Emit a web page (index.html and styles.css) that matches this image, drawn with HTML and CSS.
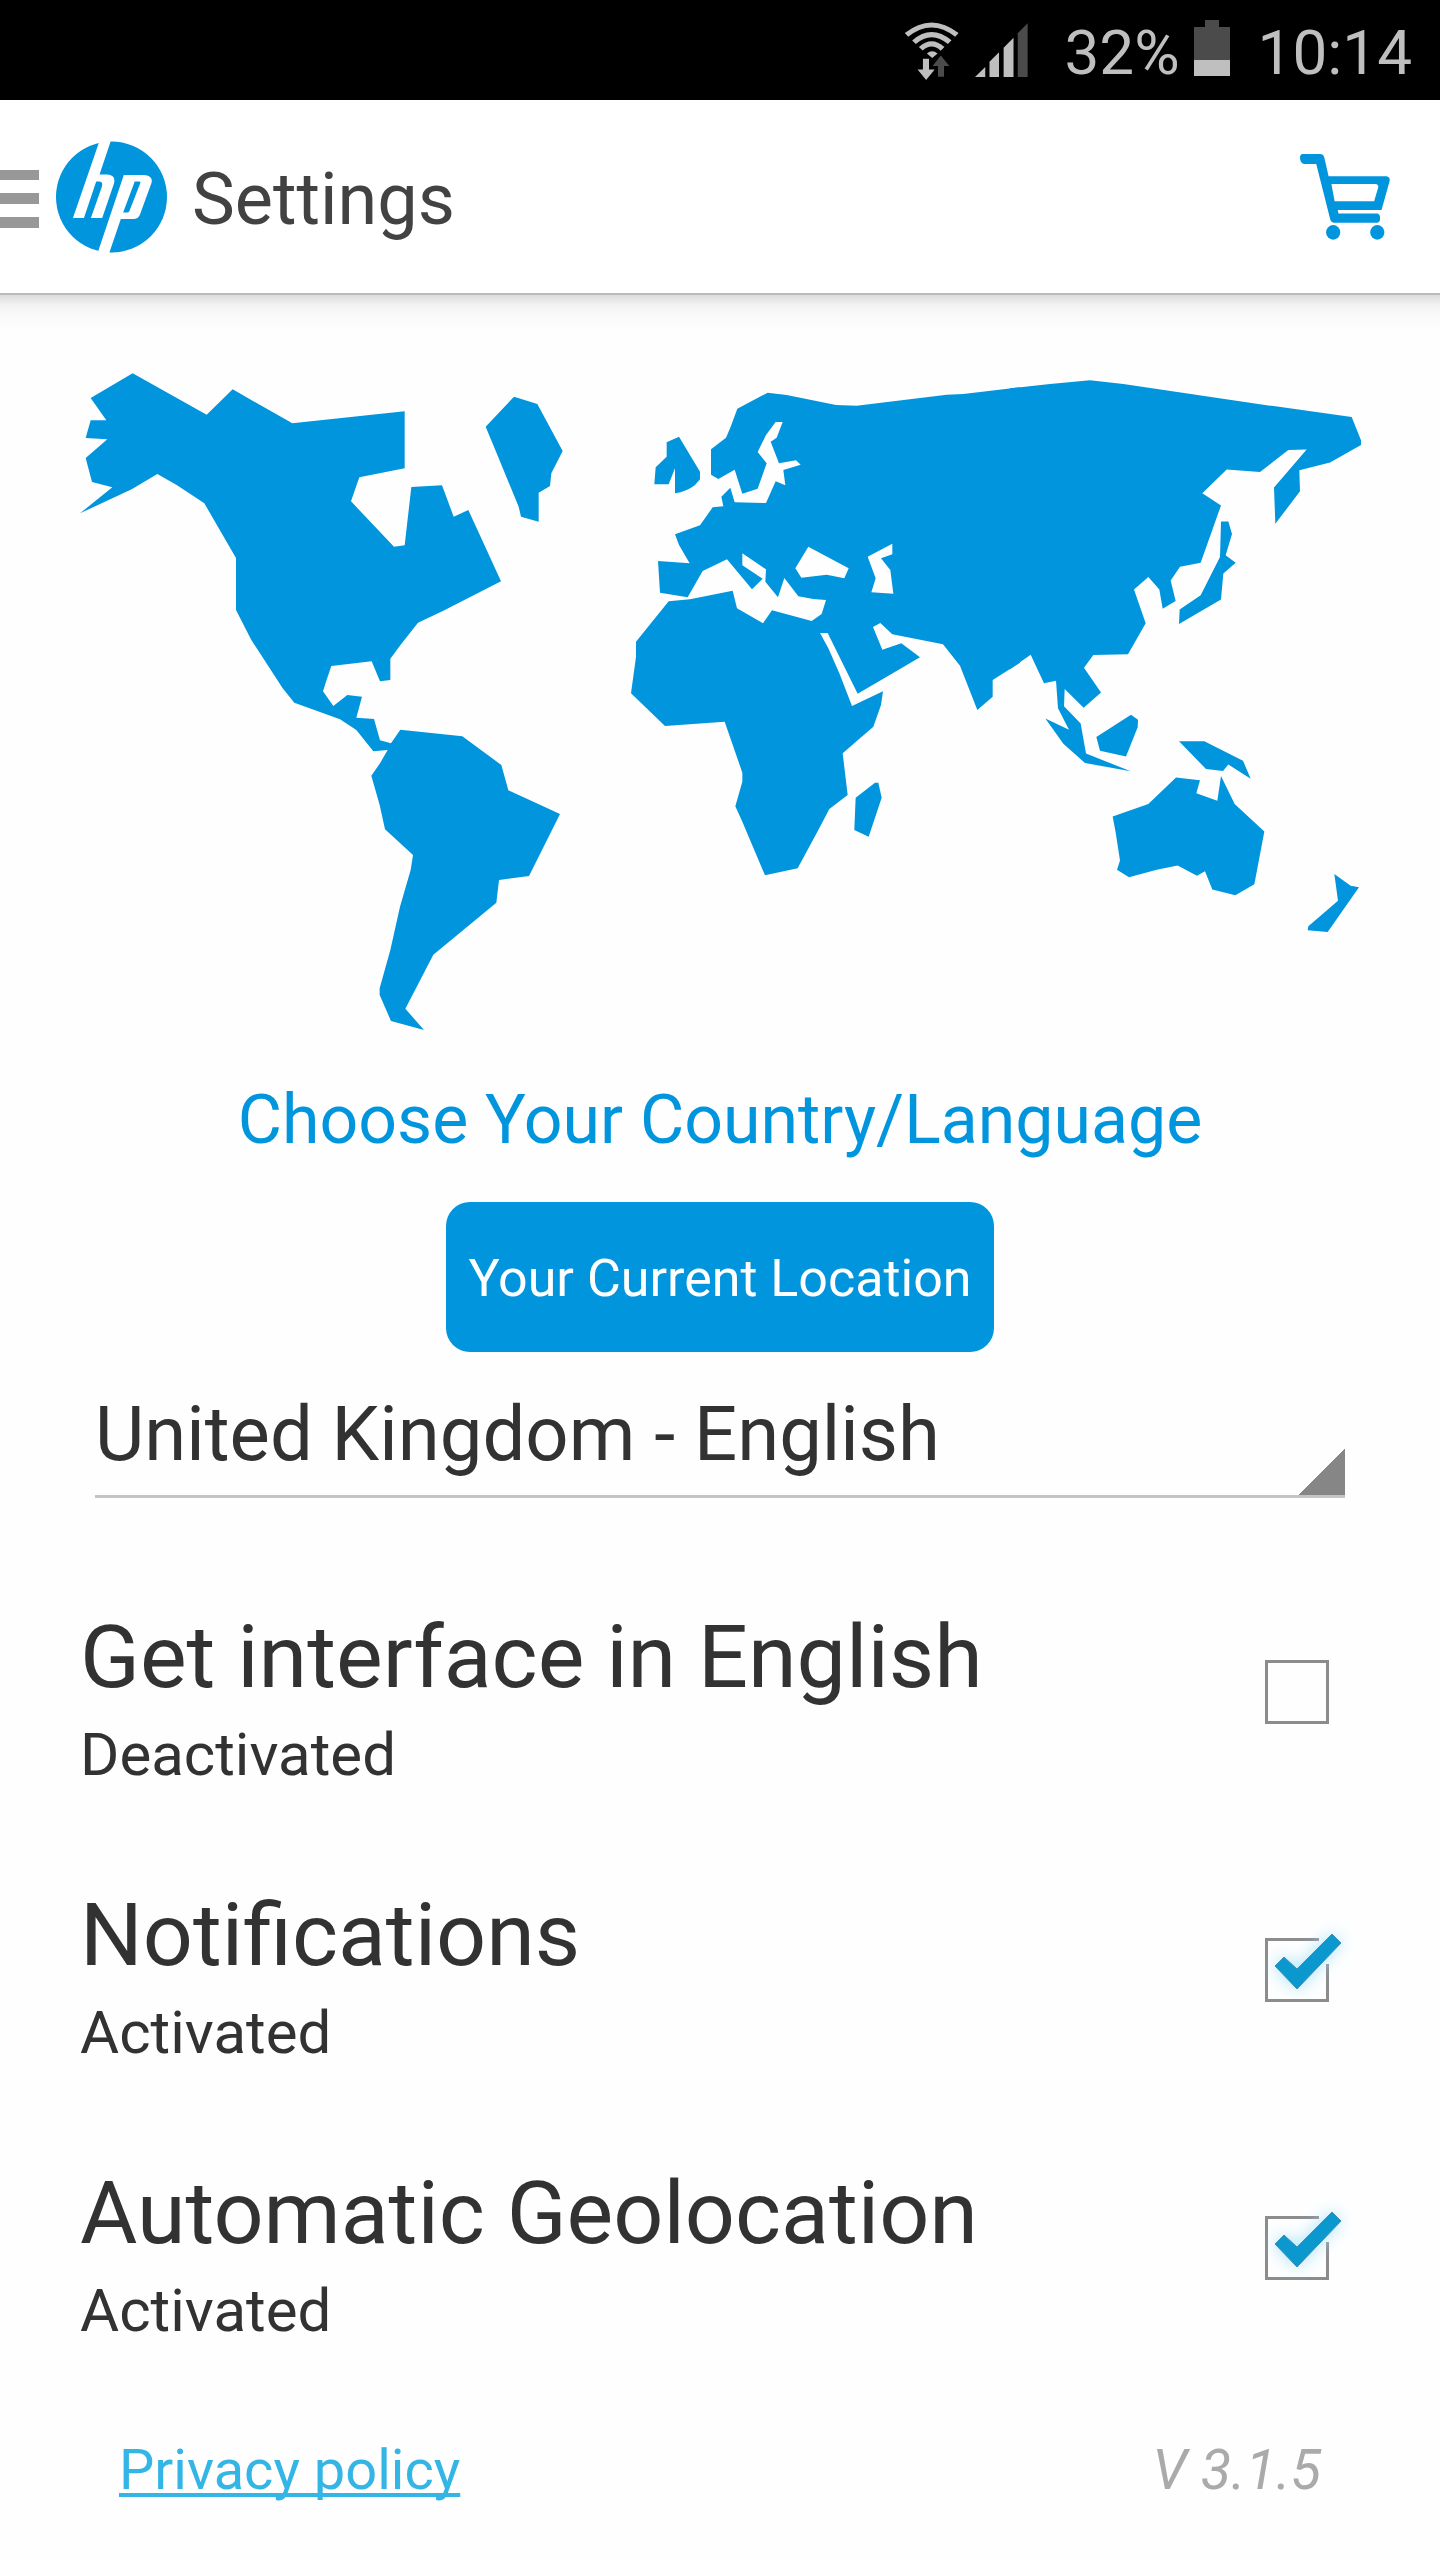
FILE: index.html
```html
<!DOCTYPE html>
<html lang="en">
<head>
    <meta charset="UTF-8">
    <meta name="viewport" content="width=device-width, initial-scale=1.0">
    <title>Settings</title>
    <link rel="stylesheet" href="styles.css">
</head>
<body>
    <div class="status-bar">
        <svg class="icon-wifi" viewBox="66 56 154 178" preserveAspectRatio="none" aria-hidden="true">
            <g fill="none" stroke="#bfbfbf" stroke-width="15">
                <path d="M73 98Q143 38 214 98"/>
                <path d="M94 120Q143 74 194 120"/>
                <path d="M113 140Q143 110 174 140"/>
            </g>
            <path fill="#bfbfbf" d="M130 154Q145 140 160 154L145 168zM119 170H136V202H152L128 234 104 202H119z"/>
            <path fill="#4b4b4b" d="M169 160L193 192H178V224H161V192H146z"/>
        </svg>
        <svg class="icon-signal" viewBox="265 66 150 162" preserveAspectRatio="none" aria-hidden="true">
            <path fill="#bfbfbf" d="M265 228L294 198V228zM306 228V182L333 154V228zM346 228V140L374 110V228z"/>
            <path fill="#4b4b4b" d="M386 228V97L414 67V228z"/>
        </svg>
        <span class="status-text">32%</span>
        <svg class="icon-battery" viewBox="0 0 36 56" aria-hidden="true">
            <path fill="#4b4b4b" d="M11 0H25V7H36V40H0V7H11z"/>
            <path fill="#bfbfbf" d="M0 40H36V56H0z"/>
        </svg>
        <span class="status-text">10:14</span>
    </div>

    <header class="app-bar">
        <button type="button" class="menu-button" aria-label="Menu">
            <svg viewBox="0 0 39 58" aria-hidden="true"><path fill="#989898" d="M0 0H39V10H0zM0 23H39V34H0zM0 47H39V58H0z"/></svg>
        </button>
        <svg class="logo" viewBox="168 150 334 336" role="img" aria-label="HP">
            <circle cx="335" cy="318" r="167" fill="#0095dd"/>
            <path fill="#fff" d="M300 146H334L299 250H322Q350 252 342 279L307 381H273L306 287Q310 271 298 271H289L252 381H219z"/>
            <path fill="#fff" fill-rule="evenodd" d="M372 252H432Q462 254 455 277L421 370Q416 384 403 384H363L327 490H292zM405 271L370 365H382Q387 365 389 360L422 275Q423 271 418 271z"/>
        </svg>
        <h1 class="title">Settings</h1>
        <button type="button" class="cart-button" aria-label="Shopping cart">
            <svg viewBox="1171 461 255 260" preserveAspectRatio="none" aria-hidden="true">
                <path fill="#0095dd" fill-rule="evenodd" d="M1179 461H1228Q1238 462 1240 472L1252 528H1416Q1427 530 1425 543L1402 630H1278L1280 641H1390Q1398 643 1398 655 1398 667 1390 669H1267Q1258 667 1256 656L1217 491H1184Q1171 490 1171 470 1172 461 1179 461zM1260 552L1269 604H1381L1393 561Q1393 553 1385 552z"/>
                <ellipse cx="1265" cy="698" rx="20" ry="22" fill="#0095dd"/>
                <ellipse cx="1390" cy="698" rx="20" ry="22" fill="#0095dd"/>
            </svg>
        </button>
    </header>

    <main class="content">
        <svg class="world-map" viewBox="60 66 3840 1980" role="img" aria-label="World map">
            <!-- the Americas and Greenland -->
            <path d="M218 70L440 194 518 118 697 220 1034 184 1034 355 898 382 873 454 1002 590 1034 586 1054 411 1146 406 1181 500 1225 480 1323 694 1150 782 1074 818 1022 884 991 926 991 990 960 994 935 934 814 948 799 992 789 1024 820 1068 862 1035 906 1040 889 1103 942 1107 960 1171 993 1180 1021 1139 1207 1159 1324 1245 1345 1321 1500 1392 1407 1578 1317 1590 1309 1658 1120 1814 1036 1976 1092 2040 993 2013 959 1935 959 1915 991 1800 1020 1670 1052 1560 1059 1515 975 1438 959 1365 934 1277 960 1240 983 1200 940 1204 889 1140 840 1108 703 1058 668 1015 574 870 528 780 528 624 433 460 350 405 292 372 215 418 60 490 157 412 96 396 77 324 142 268 77 264 92 211 139 211 92 144z"/>
            <path d="M1362 140L1432 162 1508 303 1474 370 1470 408 1436 428 1436 515 1383 500 1376 470 1310 310 1277 230z"/>
            <!-- Europe, Africa and western Asia -->
            <g transform="translate(1620 60)">
                <path fill-rule="evenodd" d="M1260 52L1090 72 1040 74 770 107 708 105 560 75 503 68 412 116 392 170 378 203 333 238 333 314 355 327 404 299 427 371 473 356 500 280 473 246 498 195 527 156 548 156 530 203 512 215 537 280 588 271 602 284 550 300 556 346 527 334 498 399 404 397 391 353 364 380 370 409 338 412 300 466 225 493 237 525 269 580 174 573 180 668 263 682 308 603 381 568 456 658 488 626 427 586 427 550 498 598 496 635 534 682 553 624 595 679 640 687 678 690 665 732 635 753 516 721 489 760 411 715 398 662 270 688 206 694 108 815 108 860 93 970 195 1068 374 1055 427 1208 427 1235 406 1309 427 1355 495 1516 593 1495 655 1380 688 1317 743 1275 728 1150 820 1070 843 1005 849 964 756 1008 718 910 685 835 660 789 683 789 773 971 960 862 904 820 847 839 819 771 841 759 877 793 1029 823 1080 887 1132 1020 1178 980 1178 930 1260 878zM625 530L746 595 733 625 680 614 604 623 586 595zM877 521L877 553 843 565 871 600 880 671 814 667 827 625 803 560z"/>
                <path d="M237 200L300 305 300 328 285 345Q260 365 225 370L225 295 206 343 163 343 167 292 200 260 200 217z"/>
                <path d="M835 1238L845 1283 806 1400 763 1380 767 1283 825 1238z"/>
            </g>
            <!-- eastern Asia and Oceania -->
            <g transform="translate(2700 30) scale(1 1.148)">
                <path d="M150 74L270 63 390 53 490 63 920 118 1175 149 1203 210 1203 222 1110 268 1018 288 1020 343 946 428 942 333 1040 234 985 235 900 293 800 286 727 348 783 380 722 530 660 540 632 576 647 630 608 650 598 600 565 567 522 600 557 688 504 769 400 771 372 804 423 869 371 909 314 860 312 905 362 950 378 1028 512 1075 375 1053 310 1003 256 937 327 966 294 910 288 838 252 845 212 770 150 808z"/>
                <path d="M783 422L805 422 816 455 797 510 827 530 790 558 783 626 657 690 659 652 722 615 780 515z"/>
                <path d="M513 927L534 940 533 960 498 1036 420 1021 409 985z"/>
                <path d="M657 996L733 996 849 1047 872 1094 805 1057 789 1074 738 1069z"/>
                <path d="M648 1091L720 1098 709 1132 772 1152 783 1087 824 1160 913 1232 883 1370 826 1399 757 1384 735 1336 711 1348 653 1321 590 1332 507 1352 471 1332 480 1308 467 1235 458 1193 565 1160z"/>
                <path d="M1123 1343L1172 1374 1197 1378 1103 1495 1043 1490 1045 1480 1134 1413z"/>
            </g>
        </svg>

        <h2 class="choose"><label for="country">Choose Your Country/Language</label></h2>
        <button type="button" class="location-button">Your Current Location</button>
        <select id="country" class="country-select">
            <option>United Kingdom - English</option>
        </select>

        <div class="options">
            <div class="option">
                <label for="interface">
                    <span class="option-name">Get interface in English</span>
                    <span class="option-state">Deactivated</span>
                </label>
                <div class="check">
                    <input type="checkbox" id="interface">
                    <svg viewBox="0 0 64 64" aria-hidden="true"><path class="gap" d="M54 -2H66V26H54z"/><path class="tick" d="M10 28L19 19 32 31 67 -4 76 5 32 51z"/></svg>
                </div>
            </div>
            <div class="option">
                <label for="notifications">
                    <span class="option-name">Notifications</span>
                    <span class="option-state">Activated</span>
                </label>
                <div class="check">
                    <input type="checkbox" id="notifications" checked>
                    <svg viewBox="0 0 64 64" aria-hidden="true"><path class="gap" d="M54 -2H66V26H54z"/><path class="tick" d="M10 28L19 19 32 31 67 -4 76 5 32 51z"/></svg>
                </div>
            </div>
            <div class="option">
                <label for="geolocation">
                    <span class="option-name">Automatic Geolocation</span>
                    <span class="option-state">Activated</span>
                </label>
                <div class="check">
                    <input type="checkbox" id="geolocation" checked>
                    <svg viewBox="0 0 64 64" aria-hidden="true"><path class="gap" d="M54 -2H66V26H54z"/><path class="tick" d="M10 28L19 19 32 31 67 -4 76 5 32 51z"/></svg>
                </div>
            </div>
        </div>

        <footer class="footer">
            <a href="#">Privacy policy</a>
            <span class="version">V 3.1.5</span>
        </footer>
    </main>

    <script>
        // Keep the state text in step with its tick box
        document.querySelectorAll('.option').forEach(function(option) {
            const box = option.querySelector('input');
            const state = option.querySelector('.option-state');

            box.addEventListener('change', function() {
                state.textContent = box.checked ? 'Activated' : 'Deactivated';
            });
        });
    </script>
</body>
</html>
```

FILE: styles.css
```css
body {
    margin: 0;
    font-family: Roboto, sans-serif;
    background-color: #fefefe;
    color: #323232;
}

button {
    padding: 0;
    border: none;
    background: none;
    font-family: inherit;
    cursor: pointer;
}

svg {
    display: block;
    flex-shrink: 0;
}

.status-bar {
    display: flex;
    justify-content: flex-end;
    align-items: center;
    height: 100px;
    padding-right: 28px;
    background-color: #000;
    color: #bfbfbf;
    font-size: 62px;
    line-height: 72px;
}

.status-text {
    padding-top: 6px;
}

.icon-wifi {
    width: 55px;
    height: 59px;
    margin-right: 16px;
}

.icon-signal {
    width: 53px;
    height: 54px;
    margin-right: 36px;
}

.icon-battery {
    width: 36px;
    height: 56px;
    margin: 0 28px 4px 14px;
}

.app-bar {
    display: flex;
    align-items: center;
    height: 193px;
    padding-right: 50px;
    background-color: #fff;
    border-bottom: 2px solid #bababa;
}

.menu-button {
    margin-right: 17px;
    padding-top: 4px;
}

.menu-button svg {
    width: 39px;
    height: 58px;
}

.logo {
    width: 111px;
    height: 112px;
}

.title {
    flex: 1;
    margin: 0;
    padding: 6px 0 0 25px;
    color: #424242;
    font-size: 72px;
    font-weight: 400;
}

.cart-button svg {
    width: 90px;
    height: 86px;
}

.content {
    display: flex;
    flex-direction: column;
    padding: 77px 80px 40px;
    background: linear-gradient(#dcdcdc, #f2f2f2 10px, #fafafa 22px, #fefefe 36px);
}

.world-map {
    width: 100%;
    fill: #0095dd;
    overflow: visible;
}

.choose {
    margin: 47px 0 41px;
    color: #0095dd;
    font-size: 68px;
    font-weight: 400;
    line-height: 82px;
    text-align: center;
}

.location-button {
    align-self: center;
    height: 150px;
    padding: 2px 22px 0;
    border-radius: 24px;
    background-color: #0095dd;
    color: #fff;
    font-size: 52px;
}

.country-select {
    appearance: none;
    height: 125px;
    margin: 21px 15px 0;
    padding: 0;
    border: none;
    border-bottom: 3px solid #c4c4c4;
    border-radius: 0;
    outline: none;
    background: linear-gradient(135deg, transparent 50%, #868686 50%) right bottom / 50px 50px no-repeat border-box;
    color: #323232;
    font-family: inherit;
    font-size: 76px;
}

.options {
    display: flex;
    flex-direction: column;
    gap: 82px;
    margin-top: 105px;
}

.option {
    display: flex;
    justify-content: space-between;
}

.option-name {
    display: block;
    font-size: 88px;
    line-height: 108px;
}

.option-state {
    display: block;
    font-size: 60px;
    line-height: 88px;
}

.check {
    position: relative;
    width: 64px;
    height: 64px;
    margin: 57px 31px 0 0;
}

.check input {
    appearance: none;
    display: block;
    box-sizing: border-box;
    width: 64px;
    height: 64px;
    margin: 0;
    border: 3px solid #8c8c8c;
}

/* the tick runs out over the corner of its box */
.check svg {
    display: none;
    position: absolute;
    inset: 0;
    overflow: visible;
    pointer-events: none;
}

.check input:checked + svg {
    display: block;
}

.gap {
    fill: #fefefe;
}

.tick {
    fill: #0a98cf;
    stroke: #3f8fb0;
    stroke-width: 1;
    filter: drop-shadow(0 0 8px #a8e2fa);
}

.footer {
    display: flex;
    justify-content: space-between;
    margin: 82px 39px 0;
    font-size: 56px;
    line-height: 66px;
}

.footer a {
    color: #33b5e5;
    text-decoration-thickness: 4px;
    text-decoration-skip-ink: none;
    text-underline-offset: 4px;
}

.version {
    color: #aaa;
    font-style: italic;
}
```
